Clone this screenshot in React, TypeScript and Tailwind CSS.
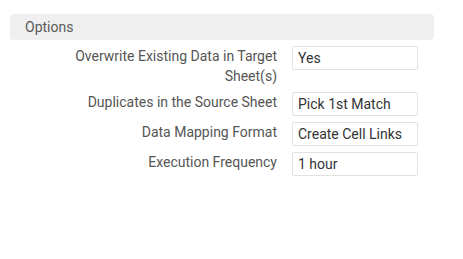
import React from "react";

const rows: { label: string; value: string }[] = [
  { label: "Overwrite Existing Data in Target Sheet(s)", value: "Yes" },
  { label: "Duplicates in the Source Sheet", value: "Pick 1st Match" },
  { label: "Data Mapping Format", value: "Create Cell Links" },
  { label: "Execution Frequency", value: "1 hour" },
];

export default function App() {
  return (
    <div
      className="w-[463px] h-[259px] bg-white pt-[14px] pl-[10px]"
      style={{ fontFamily: "Roboto, 'Open Sans', sans-serif" }}
    >
      <div className="w-[424px] h-[26px] rounded-[4px] bg-[#efefef] flex items-center pl-[15px] text-[14px] text-[#5a5a5a]">
        Options
      </div>
      <div className="flex flex-col gap-[6px] mt-[6px]">
        {rows.map((r) => (
          <div key={r.label} className="flex items-start">
            <div className="w-[210px] ml-[57px] text-right text-[14px] leading-[20px] text-[#555555]">
              {r.label}
            </div>
            <div className="ml-[15px] w-[126px] h-[24px] border border-[#e2e2e2] rounded-[2px] flex items-center pl-[5px] text-[14px] text-[#333333]">
              {r.value}
            </div>
          </div>
        ))}
      </div>
    </div>
  );
}
